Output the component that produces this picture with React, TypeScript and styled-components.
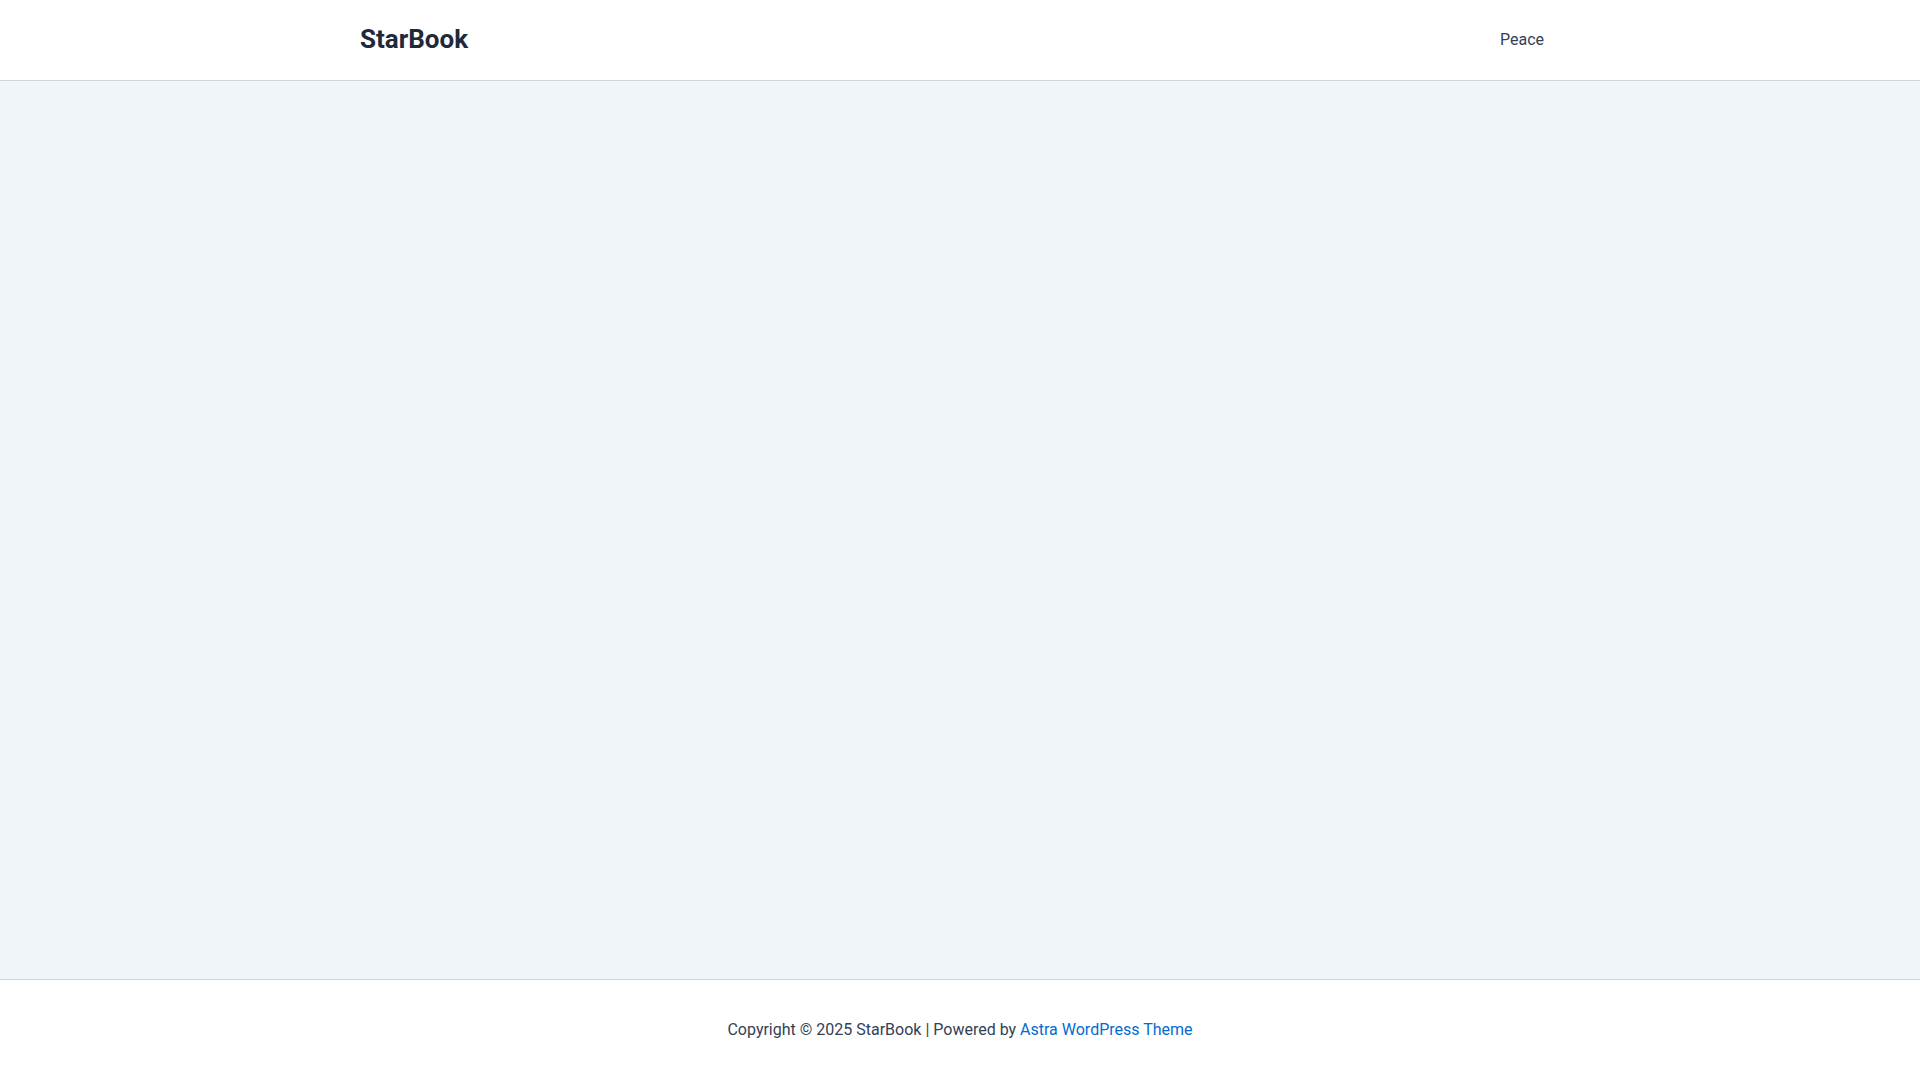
import { FC } from 'react';
import styled, { createGlobalStyle } from 'styled-components';

const Global = createGlobalStyle`
    html, body {
        margin: 0;
        padding: 0;
        background: #ffffff;
        font-family: Roboto, "Liberation Sans", sans-serif;
        -webkit-font-smoothing: antialiased;
    }
    #root {
        min-height: 100vh;
    }
`;

const Page = styled.div`
    display: flex;
    flex-direction: column;
    min-height: 100vh;
`;

const Header = styled.header`
    background: #ffffff;
    border-bottom: 1px solid #d1d5db;
`;

const Container = styled.div`
    max-width: 1200px;
    margin: 0 auto;
    padding: 0 20px;
`;

const HeaderBar = styled(Container)`
    display: flex;
    align-items: center;
    justify-content: space-between;
    min-height: 80px;
`;

const SiteTitle = styled.a`
    font-size: 26px;
    font-weight: 700;
    color: #1e293b;
    text-decoration: none;
    line-height: 1.23;
`;

const Menu = styled.nav`
    display: flex;
    align-items: center;
`;

const MenuLink = styled.a`
    padding: 0 16px;
    font-size: 16px;
    color: #334155;
    text-decoration: none;
    line-height: 80px;
`;

const Main = styled.main`
    flex: 1;
    background: #f0f5fa;
`;

const Footer = styled.footer`
    background: #ffffff;
    border-top: 1px solid #d1d5db;
    padding: 37px 0;
`;

const FooterText = styled.p`
    margin: 0;
    text-align: center;
    font-size: 16px;
    line-height: 26px;
    color: #334155;
`;

const FooterLink = styled.a`
    color: #046bd2;
    text-decoration: none;
`;

const App: FC = () => {
    return (
        <Page>
            <Global />
            <Header>
                <HeaderBar>
                    <SiteTitle href="#">StarBook</SiteTitle>
                    <Menu>
                        <MenuLink href="#">Peace</MenuLink>
                    </Menu>
                </HeaderBar>
            </Header>
            <Main />
            <Footer>
                <Container>
                    <FooterText>
                        Copyright © 2025 StarBook | Powered by{' '}
                        <FooterLink href="#">Astra WordPress Theme</FooterLink>
                    </FooterText>
                </Container>
            </Footer>
        </Page>
    );
};

export default App;
